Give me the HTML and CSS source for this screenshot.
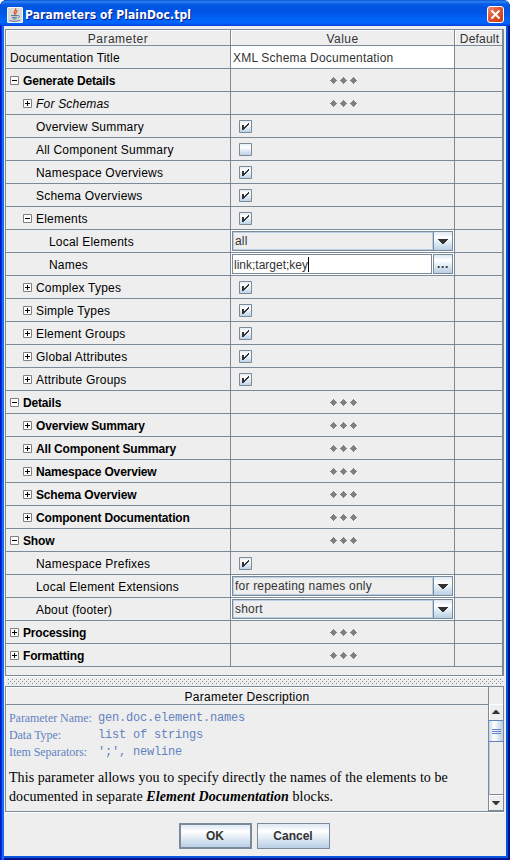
FILE: index.html
```html
<!DOCTYPE html>
<html lang="en">
<head>
<meta charset="utf-8">
<title>Parameters of PlainDoc.tpl</title>
<link rel="stylesheet" href="styles.css">
</head>
<body>
<svg class="defs" width="0" height="0" shape-rendering="crispEdges">
  <defs>
    <linearGradient id="metal" x1="0" y1="0" x2="0" y2="1">
      <stop offset="0" stop-color="#dde8f3"/><stop offset=".3" stop-color="#fff"/><stop offset="1" stop-color="#b8cfe5"/>
    </linearGradient>
    <symbol id="plus" viewBox="0 0 9 9"><path fill="#fff" stroke="#808080" d="M.5.5h8v8h-8z"/><path stroke="#000" d="M2 4.5h5M4.5 2v5"/></symbol>
    <symbol id="minus" viewBox="0 0 9 9"><path fill="#fff" stroke="#808080" d="M.5.5h8v8h-8z"/><path stroke="#000" d="M2 4.5h5"/></symbol>
    <symbol id="off" viewBox="0 0 13 13"><path fill="url(#metal)" stroke="#7a8a99" d="M.5.5h12v12h-12z"/></symbol>
    <symbol id="on" viewBox="0 0 13 13"><path fill="url(#metal)" stroke="#7a8a99" d="M.5.5h12v12h-12z"/><path fill="#333" d="M3 5h2v2h1v-1h1v-1h1v-1h1v-1h1v2h-1v1h-1v1h-1v1h-1v1h-1v1h-2z"/></symbol>
    <symbol id="dots" viewBox="0 0 27 7"><path fill="#808080" d="M3 0h1v1h1v1h1v1h1v1h-1v1h-1v1h-1v1h-1v-1h-1v-1h-1v-1h-1v-1h1v-1h1v-1h1zM13 0h1v1h1v1h1v1h1v1h-1v1h-1v1h-1v1h-1v-1h-1v-1h-1v-1h-1v-1h1v-1h1v-1h1zM23 0h1v1h1v1h1v1h1v1h-1v1h-1v1h-1v1h-1v-1h-1v-1h-1v-1h-1v-1h1v-1h1v-1h1z"/></symbol>
    <symbol id="down" viewBox="0 0 10 5"><path fill="#333" d="M0 0h10v1h-1v1h-1v1h-1v1h-1v1h-2v-1h-1v-1h-1v-1h-1v-1h-1z"/></symbol>
  </defs>
</svg>
<div class="window">
  <header class="titlebar">
    <svg class="java" width="16" height="16" viewBox="0 0 16 16"><rect width="16" height="16" rx="1.5" fill="#d9d9d6"/><rect x=".5" y=".5" width="15" height="15" rx="1" fill="none" stroke="#f6f6f4"/><path d="M8.6 1.2C10 3.3 6 4.2 7.200 6.200L8 7.500M10.500 3.500C8 4.800 9.600 5.500 8.500 7.500" fill="none" stroke="#e0401c" stroke-width="1.1"/><path d="M4.200 8.500h6.300M4.800 10.400h5M5.500 12h4M10.500 8.600c2.500-.8 2.500 1.600.2 2.200M2.500 13.500c3 1.300 8 1.200 10.500-.4" fill="none" stroke="#54779d"/></svg>
    <h1>Parameters of PlainDoc.tpl</h1>
    <svg class="close" width="17" height="17" viewBox="0 0 17 17"><defs><linearGradient id="red" x1="0" y1="0" x2="1" y2="1"><stop offset="0" stop-color="#f0907a"/><stop offset=".45" stop-color="#e25431"/><stop offset="1" stop-color="#c63a0c"/></linearGradient></defs><rect x=".5" y=".5" width="16" height="16" rx="2.500" fill="url(#red)" stroke="#fff"/><path d="M4.500 4.500l8 8M12.500 4.500l-8 8" stroke="#fff" stroke-width="2.100"/></svg>
  </header>
  <main class="content">
    <section class="grid">
      <div class="row head"><div>Parameter</div><div>Value</div><div>Default</div></div>
      <div class="row"><div class="l0"><span>Documentation Title</span></div><div class="edit"><span>XML Schema Documentation</span></div><div></div></div>
      <div class="row bold"><div class="l1"><svg><use href="#minus"/></svg><span>Generate Details</span></div><div class="more"><svg><use href="#dots"/></svg></div><div></div></div>
      <div class="row"><div class="l2"><svg><use href="#plus"/></svg><span><i>For Schemas</i></span></div><div class="more"><svg><use href="#dots"/></svg></div><div></div></div>
      <div class="row"><div class="l2 leaf"><span>Overview Summary</span></div><div class="check"><svg><use href="#on"/></svg></div><div></div></div>
      <div class="row"><div class="l2 leaf"><span>All Component Summary</span></div><div class="check"><svg><use href="#off"/></svg></div><div></div></div>
      <div class="row"><div class="l2 leaf"><span>Namespace Overviews</span></div><div class="check"><svg><use href="#on"/></svg></div><div></div></div>
      <div class="row"><div class="l2 leaf"><span>Schema Overviews</span></div><div class="check"><svg><use href="#on"/></svg></div><div></div></div>
      <div class="row"><div class="l2"><svg><use href="#minus"/></svg><span>Elements</span></div><div class="check"><svg><use href="#on"/></svg></div><div></div></div>
      <div class="row"><div class="l3"><span>Local Elements</span></div><div class="field"><div class="combo"><span>all</span><b><svg><use href="#down"/></svg></b></div></div><div></div></div>
      <div class="row"><div class="l3"><span>Names</span></div><div class="field"><div class="text"><span>link;target;key</span></div><div class="browse">...</div></div><div></div></div>
      <div class="row"><div class="l2"><svg><use href="#plus"/></svg><span>Complex Types</span></div><div class="check"><svg><use href="#on"/></svg></div><div></div></div>
      <div class="row"><div class="l2"><svg><use href="#plus"/></svg><span>Simple Types</span></div><div class="check"><svg><use href="#on"/></svg></div><div></div></div>
      <div class="row"><div class="l2"><svg><use href="#plus"/></svg><span>Element Groups</span></div><div class="check"><svg><use href="#on"/></svg></div><div></div></div>
      <div class="row"><div class="l2"><svg><use href="#plus"/></svg><span>Global Attributes</span></div><div class="check"><svg><use href="#on"/></svg></div><div></div></div>
      <div class="row"><div class="l2"><svg><use href="#plus"/></svg><span>Attribute Groups</span></div><div class="check"><svg><use href="#on"/></svg></div><div></div></div>
      <div class="row bold"><div class="l1"><svg><use href="#minus"/></svg><span>Details</span></div><div class="more"><svg><use href="#dots"/></svg></div><div></div></div>
      <div class="row bold"><div class="l2"><svg><use href="#plus"/></svg><span>Overview Summary</span></div><div class="more"><svg><use href="#dots"/></svg></div><div></div></div>
      <div class="row bold"><div class="l2"><svg><use href="#plus"/></svg><span>All Component Summary</span></div><div class="more"><svg><use href="#dots"/></svg></div><div></div></div>
      <div class="row bold"><div class="l2"><svg><use href="#plus"/></svg><span>Namespace Overview</span></div><div class="more"><svg><use href="#dots"/></svg></div><div></div></div>
      <div class="row bold"><div class="l2"><svg><use href="#plus"/></svg><span>Schema Overview</span></div><div class="more"><svg><use href="#dots"/></svg></div><div></div></div>
      <div class="row bold"><div class="l2"><svg><use href="#plus"/></svg><span>Component Documentation</span></div><div class="more"><svg><use href="#dots"/></svg></div><div></div></div>
      <div class="row bold"><div class="l1"><svg><use href="#minus"/></svg><span>Show</span></div><div class="more"><svg><use href="#dots"/></svg></div><div></div></div>
      <div class="row"><div class="l2 leaf"><span>Namespace Prefixes</span></div><div class="check"><svg><use href="#on"/></svg></div><div></div></div>
      <div class="row"><div class="l2 leaf"><span>Local Element Extensions</span></div><div class="field"><div class="combo"><span>for repeating names only</span><b><svg><use href="#down"/></svg></b></div></div><div></div></div>
      <div class="row"><div class="l2 leaf"><span>About (footer)</span></div><div class="field"><div class="combo"><span>short</span><b><svg><use href="#down"/></svg></b></div></div><div></div></div>
      <div class="row bold"><div class="l1"><svg><use href="#plus"/></svg><span>Processing</span></div><div class="more"><svg><use href="#dots"/></svg></div><div></div></div>
      <div class="row bold"><div class="l1"><svg><use href="#plus"/></svg><span>Formatting</span></div><div class="more"><svg><use href="#dots"/></svg></div><div></div></div>
    </section>
    <div class="splitter"></div>
    <section class="description">
      <div class="doc">
        <h2>Parameter Description</h2>
        <dl>
          <dt>Parameter Name:</dt><dd>gen.doc.element.names</dd>
          <dt>Data Type:</dt><dd>list of strings</dd>
          <dt>Item Separators:</dt><dd>';', newline</dd>
        </dl>
        <p>This parameter allows you to specify directly the names of the elements to be<br>documented in separate <b><i>Element Documentation</i></b> blocks.</p>
      </div>
      <div class="scroll">
        <div class="corner"></div>
        <div class="arrow up"><svg><use href="#down"/></svg></div>
        <div class="thumb"><i></i><i></i><i></i></div>
        <div class="track"></div>
        <div class="arrow"><svg><use href="#down"/></svg></div>
      </div>
    </section>
    <footer><div class="button default">OK</div><div class="button">Cancel</div></footer>
  </main>
</div>
</body>
</html>
```
FILE: styles.css
```css
* { box-sizing: border-box; }
body { margin: 0; background: #fff; font: 12px/15px "Liberation Sans", Arial, sans-serif; color: #000; }
.defs { position: absolute; }
.window {
  width: 510px; height: 860px; padding: 0 4px 4px; display: flex; flex-direction: column;
  border-radius: 7px 7px 0 0; overflow: hidden; background: #0831d9;
  box-shadow: inset 1px 0 #0019cf, inset 2px 0 #0831d9, inset 4px 0 #166aee, inset -2px -2px #00138c, inset -4px -4px #0855dd;
}
.titlebar {
  height: 26px; margin: 0 -4px; padding: 4px 6px 0 7px; display: flex; align-items: center; flex: none;
  background: linear-gradient(#0b52d0 0, #2d85f5 7%, #0a5ce4 15%, #0054e3 28%, #0055e5 50%, #0064fc 76%, #0066ff 88%, #003dd7 100%);
}
.titlebar h1 { flex: 1; margin: 0 0 0 2px; font: bold 12px/16px "DejaVu Sans Condensed", "DejaVu Sans", sans-serif; letter-spacing: .09px; color: #fff; text-shadow: 1px 1px #0a1883; }
.titlebar svg { flex: none; }
.titlebar .close { margin-top: -1px; }
.content { flex: 1; background: #eee; padding-top: 3px; display: flex; flex-direction: column; }
.grid { height: 647px; margin: 0 2px 0 1px; border: 1px solid #7a8a99; border-right-width: 2px; flex: none; box-shadow: 0 1px #fff; }
.row { height: 23px; display: grid; grid-template-columns: 225px 224px 1fr; grid-template-rows: 100%; }
.row > div { border-right: 1px solid #7a8a99; border-bottom: 1px solid #7a8a99; display: flex; align-items: center; min-width: 0; white-space: nowrap; letter-spacing: .2px; }
.row > div:last-child { border-right: 0; }
.row > div > span { padding-top: 2px; }
.row.head { height: 16px; }
.row.head > div { justify-content: center; color: #333; line-height: 13px; letter-spacing: .48px; padding-top: 3px; box-shadow: inset 1px 1px #fff; }
.row.head > div:last-child { letter-spacing: .2px; padding-left: 2px; }
.bold { font-weight: bold; }
.row.bold > div { letter-spacing: -.16px; }
.l0 { padding-left: 4px; }
.l1 { padding-left: 4px; }
.l2 { padding-left: 17px; }
.row .leaf { padding-left: 30px; }
.l3 { padding-left: 43px; }
.l1 svg, .l2 svg { width: 9px; height: 9px; margin-right: 4px; }
.edit { background: #fff; color: #333; padding-left: 2px; }
.more { justify-content: center; }
.more svg { width: 27px; height: 7px; margin-left: 2px; }
.check { padding-left: 8px; }
.check svg { width: 13px; height: 13px; }
.row > .field { padding: 0 1px; color: #333; background: #fff; }
.combo { display: flex; width: 221px; height: 20px; border: 1px solid #7a8a99; background: #eee; }
.combo span { flex: 1; padding-left: 1px; line-height: 16px; border: 1px solid #b8cfe5; }
.combo b, .browse { width: 19px; border-left: 1px solid #7a8a99; background: linear-gradient(#dde8f3, #fff 30%, #b8cfe5); display: flex; align-items: center; justify-content: center; }
.combo svg { width: 10px; height: 5px; margin-top: 1px; }
.text { width: 200px; height: 20px; border: 1px solid #7a8a99; padding: 2px 0 0 1px; letter-spacing: 0; }
.text span { display: inline-block; border-right: 1px solid #000; height: 15px; line-height: 16px; }
.browse { width: 20px; height: 20px; margin-left: 1px; border: 1px solid #7a8a99; font-weight: bold; letter-spacing: .6px; }
.splitter { height: 5px; margin: 3px 3px 2px 4px; flex: none; background-image: radial-gradient(circle at .5px .5px, #7a8a99 .6px, transparent .7px), radial-gradient(circle at 2.5px 2.5px, #7a8a99 .6px, transparent .7px); background-size: 4px 4px; }
.description { height: 126px; margin: 0 2px 0 1px; border: 1px solid #7a8a99; box-shadow: 0 1px #fff; display: flex; flex: none; }
.doc { flex: 1; }
.doc h2 { margin: 0; height: 18px; padding-top: 2px; border-bottom: 1px solid #7a8a99; box-shadow: inset 1px 1px #fff; text-align: center; font: 12px/16px "Liberation Sans", Arial, sans-serif; letter-spacing: .26px; }
dl { margin: 5px 0 0 3px; display: grid; grid-template-columns: 89px 1fr; grid-auto-rows: 17px; line-height: 17px; color: #6382bf; }
dt { font-family: "Liberation Serif", serif; font-size: 12px; letter-spacing: -.06px; white-space: nowrap; }
dd { margin: 0; font-family: "Liberation Mono", monospace; font-size: 12px; letter-spacing: -.2px; }
.doc p { margin: 7px 0 0 3px; font: 14px/19px "Liberation Serif", serif; letter-spacing: .07px; white-space: nowrap; }
.scroll { width: 15px; border-left: 1px solid #7a8a99; display: flex; flex-direction: column; }
.corner { height: 17px; }
.arrow { height: 16px; display: flex; justify-content: center; align-items: center; box-shadow: inset 1px 1px #fff; border-bottom: 1px solid #7a8a99; }
.arrow svg { width: 8px; height: 4px; }
.up { border-bottom: 0; }
.up svg { transform: rotate(180deg); }
.thumb { height: 22px; border: solid #6382bf; border-width: 1px 0; background: linear-gradient(90deg, #c5d8ea, #fff 35%, #b8cfe5); display: flex; flex-direction: column; gap: 1px; align-items: center; justify-content: center; }
.thumb i { width: 9px; height: 1px; background: #6382bf; }
.track { flex: 1; border-left: 1px solid #b8cfe5; border-bottom: 1px solid #7a8a99; }
footer { display: flex; gap: 5px; justify-content: center; padding: 11px 2px 0 0; }
.button { width: 73px; height: 26px; border: 1px solid #7a8a99; background: linear-gradient(#dde8f3, #fff 30%, #b8cfe5); color: #333; font-weight: bold; line-height: 25px; text-align: center; letter-spacing: 0; }
.default { border-width: 2px; line-height: 23px; }
```
